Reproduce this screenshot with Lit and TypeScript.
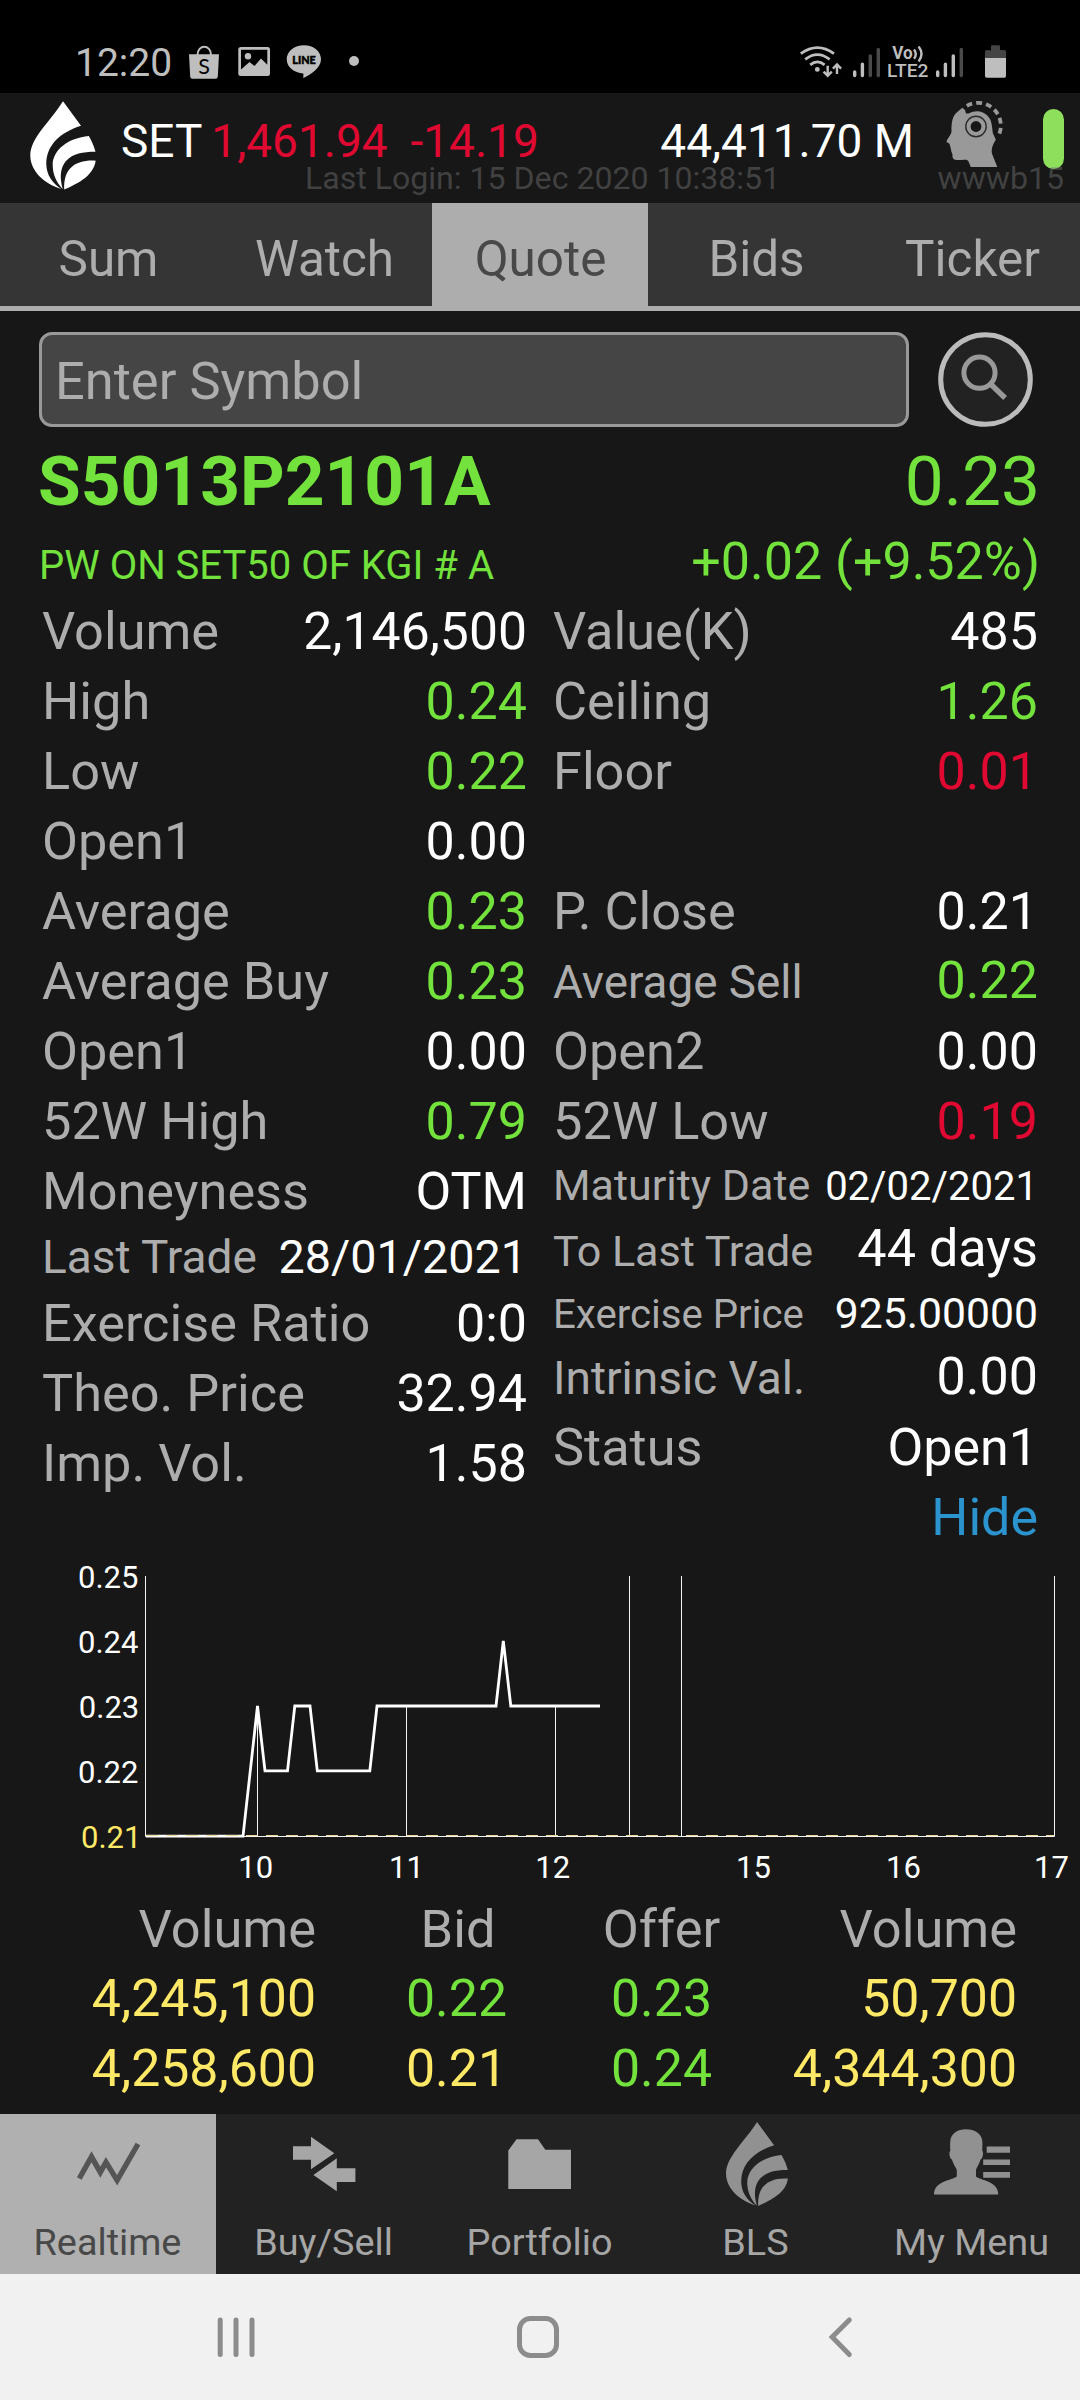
import { LitElement, html, svg, css, nothing } from "lit";
import { customElement } from "lit/decorators.js";
import { classMap } from "lit/directives/class-map.js";
import { styleMap } from "lit/directives/style-map.js";

type Tone = "plain" | "up" | "down" | "even";

interface Cell {
  label: string;
  value: string;
  tone?: Tone;
  height?: number;
  labelSize?: number;
  valueSize?: number;
}

const LEFT: Cell[] = [
  { label: "Volume", value: "2,146,500", valueSize: 51.7 },
  { label: "High", value: "0.24", tone: "up" },
  { label: "Low", value: "0.22", tone: "up" },
  { label: "Open1", value: "0.00" },
  { label: "Average", value: "0.23", tone: "up" },
  { label: "Average Buy", value: "0.23", tone: "up" },
  { label: "Open1", value: "0.00" },
  { label: "52W High", value: "0.79", tone: "up" },
  { label: "Moneyness", value: "OTM" },
  { label: "Last Trade", value: "28/01/2021", height: 62, labelSize: 46, valueSize: 46.7 },
  { label: "Exercise Ratio", value: "0:0" },
  { label: "Theo. Price", value: "32.94" },
  { label: "Imp. Vol.", value: "1.58" },
];

const RIGHT: Cell[] = [
  { label: "Value(K)", value: "485" },
  { label: "Ceiling", value: "1.26", tone: "up" },
  { label: "Floor", value: "0.01", tone: "down" },
  { label: "", value: "" },
  { label: "P. Close", value: "0.21" },
  { label: "Average Sell", value: "0.22", tone: "up", labelSize: 45.8 },
  { label: "Open2", value: "0.00" },
  { label: "52W Low", value: "0.19", tone: "down" },
  { label: "Maturity Date", value: "02/02/2021", height: 58, labelSize: 43, valueSize: 40 },
  { label: "To Last Trade", value: "44 days", labelSize: 43.1, valueSize: 52.2 },
  { label: "Exercise Price", value: "925.00000", height: 58, labelSize: 40.2, valueSize: 42.7 },
  { label: "Intrinsic Val.", value: "0.00", labelSize: 46 },
  { label: "Status", value: "Open1" },
];

const TABS = ["Sum", "Watch", "Quote", "Bids", "Ticker"];

const BOOK: { bidVol: string; bid: string; bidTone: Tone; offer: string; offerVol: string }[] = [
  { bidVol: "4,245,100", bid: "0.22", bidTone: "up", offer: "0.23", offerVol: "50,700" },
  { bidVol: "4,258,600", bid: "0.21", bidTone: "even", offer: "0.24", offerVol: "4,344,300" },
];

const Y_TICKS = [
  { text: "0.25", x: 78, y: 1587.5 },
  { text: "0.24", x: 78, y: 1652.5 },
  { text: "0.23", x: 78.8, y: 1717.5 },
  { text: "0.22", x: 78, y: 1782.5 },
];
const X_TICKS = [
  { text: "10", x: 238.3 },
  { text: "11", x: 389 },
  { text: "12", x: 535.3 },
  { text: "15", x: 736 },
  { text: "16", x: 886 },
  { text: "17", x: 1034 },
];

const drop = svg`
  <path d="M63 101.3 L81 125.7 C60 132.5 46.3 145 46.3 164 C46.3 175 53 184 61.5 189 C45 184 30.3 171.5 30.3 155.5 C30.3 138 50 122 63 101.3 Z"/>
  <path d="M88.8 136 C68 138 52.7 150 52.7 165 C52.7 175 57 183 62.8 189 C59.5 178 60 168 66 161 C73 153.5 83 151.8 95.5 151.8 C94 146 91.5 140.5 88.8 136 Z"/>
  <path d="M95.7 160.7 C76 159.5 63 168 64.2 189.5 C80 182.5 93.5 175 95.7 160.7 Z"/>`;

const DOCK = [
  {
    label: "Realtime",
    icon: svg`<path d="M79.3 2178.5 L91.5 2156.8 L100.3 2172.2 L106 2162.2 L117.1 2180.3 L138 2144" fill="none" stroke="#555" stroke-width="5.4" stroke-miterlimit="8"/>`,
  },
  {
    label: "Buy/Sell",
    icon: svg`<g fill="#a6a6a6"><path d="M293 2146.3H311V2136.8L334.3 2153.3L311 2169.3V2159.7H293Z"/><path d="M355.4 2168.3H336.8V2158.3L313.4 2175L336.8 2191.3V2182H355.4Z"/></g>`,
  },
  {
    label: "Portfolio",
    icon: svg`<path fill="#a6a6a6" d="M508.3 2150.5L516.5 2139.3H538L545.3 2149.8H571V2189H508.3Z"/>`,
  },
  {
    label: "BLS",
    icon: svg`<g fill="#919191" transform="translate(697.3 2025.4) scale(.948 .953)">${drop}</g>`,
  },
  {
    label: "My Menu",
    icon: svg`<g fill="#919191">
      <path d="M966 2129.2 C974.5 2129.2 982.2 2133.5 982.4 2142 C982.5 2146 982.3 2149 982.2 2150.5 C983.8 2152 983 2158.5 980.5 2159.5 C979 2165 976.6 2167.5 976 2170 V2176.5 C980 2180.5 998 2180.5 998.3 2194.5 H934 C934.3 2180.5 952 2180.5 956.8 2176.5 V2170 C956 2167.5 953.5 2165 952 2159.5 C949.3 2158.5 948.7 2152 950.4 2150.5 C950.2 2149 950 2146 950.2 2142 C950.5 2133.5 957.5 2129.2 966 2129.2 Z"/>
      <path d="M986.7 2146.5H1010V2152.7H986.7ZM983.2 2159.5H1010V2165H983.2ZM983.2 2172H1010V2177.7H983.2Z"/>
    </g>`,
  },
];

@customElement("app-root")
export class AppRoot extends LitElement {
  static styles = css`
    :host {
      display: block;
      width: 1080px;
      height: 2400px;
      overflow: hidden;
      background: #171717;
      color: #fff;
      font-family: Roboto, "Liberation Sans", sans-serif;
      font-size: 52px;
    }
    svg { display: block; flex: none; }
    .up { color: #73e23c; }
    .down { color: #e00931; }
    .even { color: #ffe966; }
    .plain { color: #fff; }

    .status {
      height: 93px;
      display: flex;
      background: #000;
      box-sizing: border-box;
      padding-left: 75px;
    }
    .clock { width: 105px; font-size: 39px; line-height: 127px; height: 93px; color: #bebebe; }
    .status .radio { margin-left: 420px; }

    .head { position: relative; height: 110px; display: flex; }
    .head .index { margin-left: 21px; font-size: 46px; line-height: 97px; white-space: nowrap; }
    .index .delta { margin-left: 9px; white-space: pre; }
    .head .total { margin-left: auto; font-size: 46px; line-height: 97px; white-space: nowrap; }
    .head .mind { margin-left: 26px; }
    .pill { width: 21px; height: 60px; border-radius: 10.5px; background: #8ee05c; margin: 16px 16px 0 38px; }
    .login, .user {
      position: absolute;
      top: 65px;
      font-size: 32.1px;
      line-height: 40px;
      color: rgba(128, 128, 128, 0.42);
      white-space: nowrap;
    }
    .login { left: 305px; }
    .user { right: 16px; }

    .tabs { display: grid; grid-template-columns: repeat(5, 1fr); height: 103px; border-bottom: 5px solid #adadad; }
    .tab { text-align: center; font-size: 49.4px; line-height: 113px; height: 103px; padding-left: 1px; background: #353535; color: #adadad; }
    .tab.on { background: #adadad; color: #484848; }

    .search { display: flex; justify-content: space-between; padding: 21px 47px 0 39px; }
    .field {
      box-sizing: border-box;
      width: 870px;
      height: 95px;
      border: 3px solid #999;
      border-radius: 13px;
      background: #454545;
      color: #adadad;
      padding-left: 13px;
      font-size: 52.4px;
      line-height: 92px;
    }

    .symbol, .name { display: flex; justify-content: space-between; align-items: baseline; box-sizing: border-box; padding: 0 40px 0 38px; white-space: nowrap; }
    .symbol { height: 99px; padding-top: 10px; line-height: 89px; font-size: 69.4px; }
    .symbol b { font-weight: 700; }
    .name { height: 70px; line-height: 72px; }
    .name .full { font-size: 40px; padding-left: 1px; }

    .facts { display: grid; grid-template-columns: 485px 485px; column-gap: 26px; padding-left: 42px; height: 956px; }
    .fact { display: flex; justify-content: space-between; align-items: baseline; height: 70px; line-height: 70px; white-space: nowrap; }
    .fact .label { color: #adadad; }
    .hide { text-align: right; line-height: 72px; color: #2b94cf; }

    .book { display: grid; grid-template-columns: 316px 281px 129px 291px; height: 221px; grid-auto-rows: 70px; line-height: 72px; font-size: 51.8px; }
    .book > div { text-align: center; }
    .book > .r { text-align: right; }
    .book > .h { color: #adadad; font-size: 52.4px; }
    .book > .bid { padding-left: 3px; }

    .dock { display: grid; grid-template-columns: repeat(5, 1fr); height: 160px; background: #222; }
    .dock .item { text-align: center; font-size: 37.8px; color: #a6a6a6; line-height: 64px; }
    .dock .name-tag { padding-right: 1px; }
    .dock .item.on { background: #b0b0b0; color: #484848; }
    .nav { height: 126px; background: #f1f1f1; }

    .axis { font: 31px Roboto, sans-serif; fill: #fff; }
    .axis .ref { fill: #ffe966; }
  `;

  private statusBar() {
    return html`<div class="status">
      <div class="clock">12:20</div>
      <svg width="190" height="93" viewBox="180 0 190 93" fill="#bebebe">
        <path d="M189 54.3H219L217.8 76.5Q217.6 78.7 215.5 78.7H192.5Q190.4 78.7 190.2 76.5Z"/>
        <path d="M197.5 55C197.5 44 211 44 211 55" fill="none" stroke="#bebebe" stroke-width="2"/>
        <text x="204.2" y="74" font-size="21.5" text-anchor="middle" fill="#000" font-family="Lato, sans-serif">S</text>
        <path fill-rule="evenodd" d="M241 47H267.5Q270 47 270 49.5V73.5Q270 76 267.5 76H241Q238.3 76 238.3 73.5V49.5Q238.3 47 241 47ZM241 49.7V69.5L249.5 62L254.5 66L261 58.5L267.3 64.8V49.7Z"/>
        <circle cx="248" cy="56.3" r="3.2"/>
        <path d="M304 45.3C313.5 45.3 321 51.4 321 59.3C321 68 311 74.3 303.5 78C303 78 303.7 75.5 303.3 73.4C294 73 286.7 67 286.7 59.3C286.7 51.4 294.5 45.3 304 45.3Z"/>
        <text x="304" y="64.2" font-size="11.3" textLength="23.5" lengthAdjust="spacingAndGlyphs" text-anchor="middle" fill="#000" stroke="#000" stroke-width=".5" font-weight="900" font-family="Lato, sans-serif">LINE</text>
        <circle cx="354" cy="61" r="5"/>
      </svg>
      <svg class="radio" width="220" height="93" viewBox="790 0 220 93" fill="#bebebe">
        <g fill="none" stroke="#bebebe" stroke-width="2.8">
          <path d="M800.8 53.6Q817.4 41.6 834 53.6M805.2 59.4Q817.4 49.8 829.6 59.4M810.2 64.8Q817.4 59 824.6 64.8"/>
          <path d="M827.7 65.8V75M823.6 71.6L827.7 75.7L831.8 71.6M837 74V65M832.9 68.6L837 64.5L841.1 68.6" stroke-width="2.4"/>
        </g>
        <circle cx="817.3" cy="69.4" r="2.4"/>
        ${[854.7, 937.7].map(
          (x, i) => svg`<g stroke-width="3.4" stroke-linecap="round" stroke="#bebebe">
            <path d="M${x} 72V75.6M${x + 7.7} 64.2V75.6"/>
            <path d="M${x + 15.6} 56V75.6" stroke=${i ? "#bebebe" : "#4a4a4a"}/>
            <path d="M${x + 23.6} 49.4V75.6" stroke="#4a4a4a"/>
          </g>`
        )}
        <text x="892.3" y="59.3" font-size="17.5" font-weight="700" font-family="Roboto, sans-serif" textLength="20.5" lengthAdjust="spacingAndGlyphs">Vo</text>
        <path d="M914 49.4Q917.6 54 914 58.8M918.6 46.6Q924.4 54 918.6 61.4" fill="none" stroke="#bebebe" stroke-width="2.4"/>
        <text x="887" y="76.8" font-size="18" font-weight="500" font-family="Roboto, sans-serif" textLength="41.5" lengthAdjust="spacingAndGlyphs">LTE2</text>
        <path d="M991 50.5V46.5Q991 45.3 992.2 45.3H998.8Q1000 45.3 1000 46.5V50H1004.5Q1006 50 1006 51.5V58H985V51.5Q985 50 986.5 50Z" fill="#444"/>
        <path d="M985 58H1006V76Q1006 77.8 1004.3 77.8H986.7Q985 77.8 985 76Z"/>
      </svg>
    </div>`;
  }

  private header() {
    return html`<div class="head">
      <svg width="100" height="110" viewBox="0 93 100 110" fill="#fff">${drop}</svg>
      <div class="index">SET<span class="delta down">1,461.94  -14.19</span></div>
      <div class="total">44,411.70 M</div>
      <svg class="mind" width="65" height="110" viewBox="940 93 65 110" fill="#999">
        <path d="M962.3 107.7 L965 110 L966 113.5 L968.6 113.6 C972 111.8 975 111 977.5 111.2 C984 111.5 989.5 116 991 121.5 C992 125 992.3 129 992.8 133 L995.8 139.8 C992.5 145 990.8 150 992.3 154.5 L997.3 167 H970.8 L968.3 161 C966.5 158.5 963 160.3 956.7 160 C953 159.5 952.3 158 952.5 154.5 L951.2 151 L950.8 148.5 L949.5 143.8 L946.6 142 C946.5 139 951 135.5 951.5 131.5 C951.3 122 952.5 116 957 112.2 Z"/>
        <circle cx="976" cy="126.5" r="10.2" fill="none" stroke="#2c2c2c" stroke-width="1.4"/>
        <circle cx="976" cy="126.5" r="5.4" fill="#171717"/>
        <path d="M966.8 105.8 A22.8 22.8 0 0 1 997.8 137" fill="none" stroke="#999" stroke-width="3.8" stroke-dasharray="5.8 4.1"/>
      </svg>
      <div class="pill"></div>
      <div class="login">Last Login: 15 Dec 2020 10:38:51</div>
      <div class="user">wwwb15</div>
    </div>`;
  }

  private fact(c: Cell) {
    const h = c.height ?? 70;
    return html`<div class="fact" style=${styleMap({ height: `${h}px`, lineHeight: `${h}px` })}>
      ${c.label
        ? html`<span class="label" style=${styleMap({ fontSize: `${c.labelSize ?? 52.3}px` })}>${c.label}</span
            ><span class=${c.tone ?? "plain"} style=${styleMap({ fontSize: `${c.valueSize ?? 52}px` })}>${c.value}</span>`
        : nothing}
    </div>`;
  }

  private chart() {
    return html`<svg width="1080" height="341" viewBox="0 1552 1080 341">
      <g stroke="#f4f4f4" stroke-width="1" fill="none">
        <path d="M145.5 1576V1836.5H1054.5V1576M629.5 1576V1836M681.5 1576V1836M257.5 1706V1836M406.5 1706V1836M555.5 1706V1836"/>
      </g>
      <path d="M146 1836.2H243L257.5 1706L265 1770.8H287.5L294.8 1706H310L317.3 1770.8H369.8L377 1706H496L503.3 1641L510.8 1706H600" fill="none" stroke="#fff" stroke-width="2.8"/>
      <path d="M146 1835.5H1054" stroke="#f0dc90" stroke-width="1.2" stroke-dasharray="12 8"/>
      <g class="axis">
        ${Y_TICKS.map((t) => svg`<text x=${t.x} y=${t.y}>${t.text}</text>`)}
        <text class="ref" x="81" y="1847.5">0.21</text>
        ${X_TICKS.map((t) => svg`<text x=${t.x} y="1877.5">${t.text}</text>`)}
      </g>
    </svg>`;
  }

  render() {
    return html`
      ${this.statusBar()} ${this.header()}
      <div class="tabs">
        ${TABS.map((t) => html`<div class=${classMap({ tab: true, on: t === "Quote" })}>${t}</div>`)}
      </div>
      <div class="search">
        <div class="field">Enter Symbol</div>
        <svg width="95" height="95" viewBox="938.2 332 95 95">
          <circle cx="985.7" cy="379.5" r="44.8" fill="#222" stroke="#bbb" stroke-width="5"/>
          <circle cx="979.7" cy="372.7" r="15.6" fill="none" stroke="#999" stroke-width="5"/>
          <path d="M990.8 384L1005.3 398" stroke="#999" stroke-width="5.4"/>
        </svg>
      </div>
      <div class="symbol up"><b>S5013P2101A</b><span>0.23</span></div>
      <div class="name up"><span class="full">PW ON SET50 OF KGI # A</span><span>+0.02 (+9.52%)</span></div>
      <div class="facts">
        <div>${LEFT.map((c) => this.fact(c))}</div>
        <div>
          ${RIGHT.map((c) => this.fact(c))}
          <div class="hide">Hide</div>
        </div>
      </div>
      ${this.chart()}
      <div class="book">
        <div class="h r">Volume</div><div class="h bid">Bid</div><div class="h">Offer</div><div class="h r">Volume</div>
        ${BOOK.map(
          (r) => html`<div class="r even">${r.bidVol}</div><div class=${r.bidTone}>${r.bid}</div><div class="up">${r.offer}</div><div class="r even">${r.offerVol}</div>`
        )}
      </div>
      <div class="dock">
        ${DOCK.map(
          (d, i) => html`<div class=${classMap({ item: true, on: i === 0 })}>
            <svg width="216" height="96" viewBox="${i * 216} 2114 216 96">${d.icon}</svg>
            <div class="name-tag">${d.label}</div>
          </div>`
        )}
      </div>
      <svg class="nav" width="1080" height="126" viewBox="0 2274 1080 126" fill="none" stroke="#8c8c8c" stroke-width="5" stroke-linecap="round">
        <path d="M220.2 2320V2354.5M236 2320V2354.5M252 2320V2354.5"/>
        <rect x="519.5" y="2318.5" width="37" height="37" rx="11"/>
        <path d="M849.3 2320L832.2 2337L849.3 2354.5"/>
      </svg>
    `;
  }
}
